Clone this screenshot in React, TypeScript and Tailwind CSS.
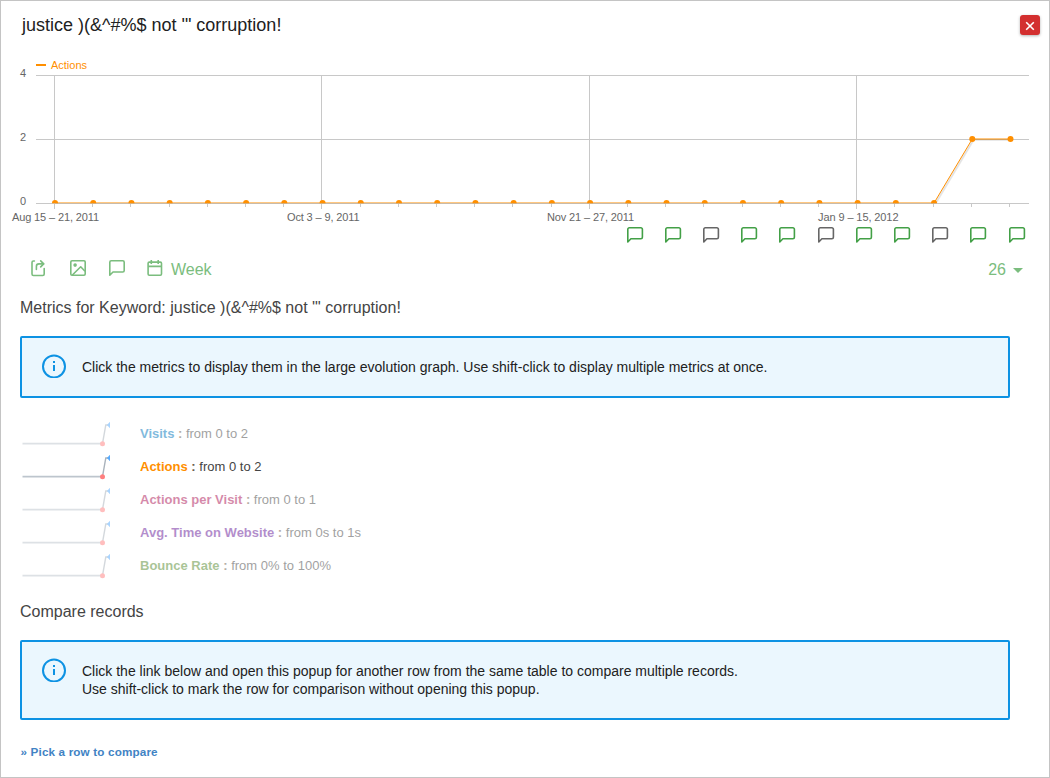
import React from "react";

const COUNT = 26;
const px = (i: number) => 55 + 38.22 * i;
const tick = (i: number) => Math.round(54 + 38.2 * i) + 0.5;

const xLabels = [
  { i: 0, x: 12, w: 87, text: "Aug 15 – 21, 2011" },
  { i: 7, x: 287, w: 72.5, text: "Oct 3 – 9, 2011" },
  { i: 14, x: 547, w: 87, text: "Nov 21 – 27, 2011" },
  { i: 21, x: 818, w: 80.5, text: "Jan 9 – 15, 2012" },
];

const notes = [
  { x: 627, on: true },
  { x: 665, on: true },
  { x: 703, on: false },
  { x: 741, on: true },
  { x: 779, on: true },
  { x: 818, on: false },
  { x: 856, on: true },
  { x: 894, on: true },
  { x: 932, on: false },
  { x: 970, on: true },
  { x: 1009, on: true },
];

const metrics = [
  { name: "Visits", range: "from 0 to 2", color: "text-[#0277bd]", active: false, w: 108 },
  { name: "Actions", range: "from 0 to 2", color: "text-[#ff8f00]", active: true, w: 121.5 },
  { name: "Actions per Visit", range: "from 0 to 1", color: "text-[#ad1457]", active: false, w: 176 },
  { name: "Avg. Time on Website", range: "from 0s to 1s", color: "text-[#6a1b9a]", active: false, w: 221 },
  { name: "Bounce Rate", range: "from 0% to 100%", color: "text-[#558b2f]", active: false, w: 191 },
];

function Bubble({ x, y, color }: { x: number; y: number; color: string }) {
  return (
    <path
      transform={`translate(${x} ${y})`}
      d="M0.8 15V2.3A1.5 1.5 0 0 1 2.3 0.8H13.9A1.5 1.5 0 0 1 15.4 2.3V10.3A1.5 1.5 0 0 1 13.9 11.8H3.9Z"
      fill="none"
      stroke={color}
      strokeWidth="1.6"
      strokeLinejoin="round"
    />
  );
}

function Chart() {
  const points = Array.from({ length: COUNT }, (_, i) => ({ x: px(i), y: i >= 24 ? 139 : 203 }));
  const line = points.map((p) => `${p.x},${p.y}`).join(" ");
  return (
    <svg width="1048" height="196" viewBox="1 54 1048 196" className="block" fontSize="11" fill="#666">
      <defs>
        <clipPath id="plot">
          <rect x="36" y="70" width="993" height="133.2" />
        </clipPath>
      </defs>
      <g stroke="#c8c8c8" strokeWidth="1">
        {[75.5, 139.5, 203.5].map((y) => (
          <line key={y} x1="36" x2="1029" y1={y} y2={y} />
        ))}
        {Array.from({ length: COUNT }, (_, i) => {
          const major = i % 7 === 0;
          return <line key={i} x1={tick(i)} x2={tick(i)} y1={major ? 75 : 204} y2={major ? 209 : 207} />;
        })}
      </g>
      <g clipPath="url(#plot)">
        <g fill="none" stroke="#000" strokeOpacity="0.09" strokeWidth="1.2">
          <polyline points={line} transform="translate(0.8 0.6)" />
          <polyline points={line} transform="translate(1.6 1.2)" />
        </g>
        <polyline points={line} fill="none" stroke="#ff8f00" strokeWidth="1" />
        {points.map((p) => (
          <circle key={p.x} cx={p.x} cy={p.y} r="3" fill="#ff8f00" />
        ))}
      </g>
      <rect x="36" y="64" width="10" height="2" fill="#ff8f00" />
      <text x="51" y="69" fill="#ff8f00" textLength="36">Actions</text>
      <text x="20" y="77">4</text>
      <text x="20" y="141">2</text>
      <text x="20" y="205">0</text>
      {xLabels.map((l) => (
        <text key={l.i} x={l.x} y="221" textLength={l.w}>{l.text}</text>
      ))}
      {notes.map((n) => (
        <Bubble key={n.x} x={n.x} y={227} color={n.on ? "#43a047" : "#666"} />
      ))}
    </svg>
  );
}

function Toolbar() {
  return (
    <div className="flex h-[38px] items-center pr-[26px] pl-[29px] text-[16px] text-[#7bbd7e]">
      <svg width="16" height="18" viewBox="0 0 16 18" className="-mt-[3px]" fill="none" stroke="currentColor" strokeWidth="1.6">
        <path d="M4.4 2H3.4Q2 2 2 3.4V15.1Q2 16.5 3.4 16.5H12.8Q14.2 16.5 14.2 15.1V9.5" strokeLinecap="round" />
        <path d="M6.4 10.5V7.4Q6.4 4.9 8.9 4.9H13.5" strokeLinecap="round" />
        <path d="M10.7 1.9L13.7 4.9L10.7 7.9" strokeLinecap="round" strokeLinejoin="round" />
      </svg>
      <svg width="18" height="18" viewBox="0 0 18 18" className="-mt-[3px] ml-[23px]" fill="none" stroke="currentColor" strokeWidth="1.6">
        <rect x="1.8" y="1.8" width="14.4" height="14.4" rx="1.2" />
        <circle cx="6.1" cy="6.1" r="1.8" fill="currentColor" stroke="none" />
        <path d="M3.4 16L11.7 7.8L16 12.2" strokeLinejoin="round" />
      </svg>
      <svg width="18" height="18" viewBox="0 0 18 18" className="-mt-[3px] ml-[21px]" fill="none" stroke="currentColor" strokeWidth="1.6" strokeLinejoin="round">
        <path d="M1.8 16.2V3.2Q1.8 1.8 3.2 1.8H14.8Q16.2 1.8 16.2 3.2V11.6Q16.2 13 14.8 13H5Z" />
      </svg>
      <svg width="18" height="18" viewBox="0 0 18 18" className="-mt-[3px] ml-[20px]" fill="none" stroke="currentColor" strokeWidth="1.6">
        <rect x="2.1" y="3.1" width="13.4" height="13.2" rx="1.2" />
        <path d="M2.2 7.4H15.5M5.3 1V5M12.2 1V5" />
      </svg>
      <span className="mt-[2px] ml-[7px] whitespace-nowrap">Week</span>
      <span className="mt-[2px] ml-auto">26</span>
      <svg width="10" height="5" viewBox="0 0 10 5" className="mt-[3px] ml-[7px]" fill="currentColor">
        <path d="M0 0H10L5 5Z" />
      </svg>
    </div>
  );
}

function Notice({ children, className }: { children: React.ReactNode; className: string }) {
  return (
    <div className={`mr-[39px] ml-[19px] flex rounded-[2px] border-2 border-[#0d92e3] bg-[#ebf7fe] pl-5 text-[14px] leading-[18px] text-[#212121] ${className}`}>
      <svg width="24" height="24" viewBox="0 0 24 24" className="mt-4 shrink-0">
        <circle cx="12" cy="12.4" r="11" fill="none" stroke="#0d92e3" strokeWidth="2" />
        <path d="M11 7h2v2h-2zM11 11h2v6h-2z" fill="#0d92e3" />
      </svg>
      <p className="mt-5 ml-4">{children}</p>
    </div>
  );
}

function Sparkline() {
  return (
    <svg width="88" height="25" viewBox="0 0 88 25" className="mt-[2px] shrink-0">
      <path d="M0.5 21.7H80.5" fill="none" stroke="#bdc5cd" strokeWidth="1.8" />
      <path d="M80.5 21.7L83.8 3H87" fill="none" stroke="#a9b2bb" strokeWidth="1.4" />
      <circle cx="80.5" cy="21.7" r="2.5" fill="#ff7f7f" />
      <path d="M88 0.5L85.4 3L88 5.5Z" fill="#55aaff" stroke="#55aaff" strokeWidth="1" />
    </svg>
  );
}

export default function App() {
  return (
    <div className="flex h-[778px] w-[1050px] flex-col overflow-hidden border border-[#c4c4c4] bg-white font-['Liberation_Sans',Arial,sans-serif]">
      <header className="flex h-[53px] shrink-0 items-start justify-between pr-[9px] pl-[21px]">
        <h1 className="mt-[14px] text-[18px] leading-[21px] text-[#212121]">justice )(&amp;^#%$ not '" corruption!</h1>
        <button aria-label="Close" className="mt-[14px] flex size-5 items-center justify-center rounded-[3px] bg-[#d32f2f] shadow-[0_1px_3px_rgba(0,0,0,0.3)]">
          <svg width="10" height="10" viewBox="0 0 10 10" className="mt-[2px]" stroke="#fff" strokeWidth="1.6">
            <path d="M1.2 1.2L8.8 8.8M8.8 1.2L1.2 8.8" />
          </svg>
        </button>
      </header>
      <div className="h-[196px] shrink-0"><Chart /></div>
      <Toolbar />
      <h2 className="mt-[10px] pl-[19px] text-[16px] leading-[19px] text-[#444]">Metrics for Keyword: justice )(&amp;^#%$ not '" corruption!</h2>
      <Notice className="mt-[19px] h-[62px] shrink-0">
        Click the metrics to display them in the large evolution graph. Use shift-click to display multiple metrics at once.
      </Notice>
      <ul className="mt-[19px] shrink-0">
        {metrics.map((m) => (
          <li key={m.name} className={`flex h-[33px] items-center pl-[21px] text-[13px] text-[#444] ${m.active ? "" : "opacity-50"}`}>
            <Sparkline />
            <svg width="240" height="20" viewBox="0 0 240 20" className="ml-[30px]" fill="currentColor">
              <text x="0" y="14" textLength={m.w}>
                <tspan className={m.color} fill="currentColor" fontWeight="bold">{m.name}</tspan>
                <tspan fill="#6b5d4d" fontWeight="bold"> : </tspan>
                {m.range}
              </text>
            </svg>
          </li>
        ))}
      </ul>
      <h2 className="mt-[20px] pl-[19px] text-[16px] leading-[19px] text-[#444]">Compare records</h2>
      <Notice className="mt-[19px] h-[80px] shrink-0">
        Click the link below and open this popup for another row from the same table to compare multiple records.
        <br />
        Use shift-click to mark the row for comparison without opening this popup.
      </Notice>
      <a className="mt-[25px] pl-[19.5px] text-[11.7px] leading-[14px] font-bold tracking-[0.15px] text-[#4183c4]">» Pick a row to compare</a>
    </div>
  );
}
